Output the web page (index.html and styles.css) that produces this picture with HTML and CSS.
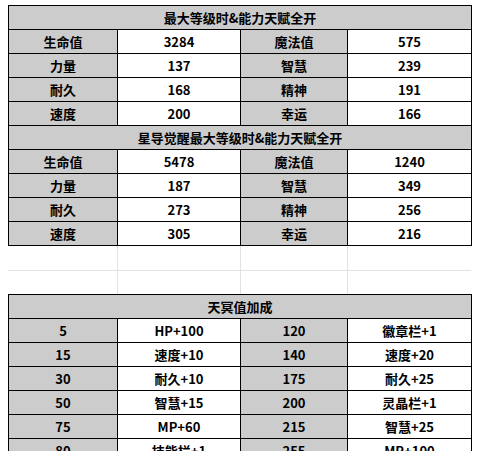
FILE: index.html
```html
<!DOCTYPE html>
<html>
<head>
<meta charset="utf-8">
<link rel="stylesheet" href="styles.css">
</head>
<body>
<div class="page">
<table class="sheet">
<colgroup><col class="c1"><col class="c2"><col class="c3"><col class="c4"></colgroup>
<tr><th colspan="4" class="head">最大等级时&amp;能力天赋全开</th></tr>
<tr><td class="k">生命值</td><td class="v">3284</td><td class="k">魔法值</td><td class="v">575</td></tr>
<tr><td class="k">力量</td><td class="v">137</td><td class="k">智慧</td><td class="v">239</td></tr>
<tr><td class="k">耐久</td><td class="v">168</td><td class="k">精神</td><td class="v">191</td></tr>
<tr><td class="k">速度</td><td class="v">200</td><td class="k">幸运</td><td class="v">166</td></tr>
<tr><th colspan="4" class="head">星导觉醒最大等级时&amp;能力天赋全开</th></tr>
<tr><td class="k">生命值</td><td class="v">5478</td><td class="k">魔法值</td><td class="v">1240</td></tr>
<tr><td class="k">力量</td><td class="v">187</td><td class="k">智慧</td><td class="v">349</td></tr>
<tr><td class="k">耐久</td><td class="v">273</td><td class="k">精神</td><td class="v">256</td></tr>
<tr><td class="k">速度</td><td class="v">305</td><td class="k">幸运</td><td class="v">216</td></tr>
</table>
<table class="grid">
<colgroup><col class="c1"><col class="c2"><col class="c3"><col class="c4"></colgroup>
<tr><td></td><td></td><td></td><td></td></tr>
<tr><td></td><td></td><td></td><td></td></tr>
</table>
<table class="sheet">
<colgroup><col class="c1"><col class="c2"><col class="c3"><col class="c4"></colgroup>
<tr><th colspan="4" class="head">天冥值加成</th></tr>
<tr><td class="k">5</td><td class="v">HP+100</td><td class="k">120</td><td class="v">徽章栏+1</td></tr>
<tr><td class="k">15</td><td class="v">速度+10</td><td class="k">140</td><td class="v">速度+20</td></tr>
<tr><td class="k">30</td><td class="v">耐久+10</td><td class="k">175</td><td class="v">耐久+25</td></tr>
<tr><td class="k">50</td><td class="v">智慧+15</td><td class="k">200</td><td class="v">灵晶栏+1</td></tr>
<tr><td class="k">75</td><td class="v">MP+60</td><td class="k">215</td><td class="v">智慧+25</td></tr>
<tr><td class="k">80</td><td class="v">技能栏+1</td><td class="k">255</td><td class="v">MP+100</td></tr>
</table>
</div>
</body>
</html>
```
FILE: styles.css
```css
html, body {
  margin: 0;
  padding: 0;
  background: #ffffff;
}
.page {
  padding: 5px 0 0 8px;
  font-family: "Noto Sans CJK SC", "Noto Sans", sans-serif;
  font-size: 13px;
  font-weight: bold;
  color: #000;
}
table {
  border-collapse: collapse;
  table-layout: fixed;
  width: 463px;
}
.c1 { width: 109px; }
.c2 { width: 123px; }
.c3 { width: 107px; }
.c4 { width: 124px; }
.sheet tr { height: 24px; }
.sheet th, .sheet td {
  border: 1px solid #000;
  padding: 0;
  text-align: center;
  line-height: 16px;
  white-space: nowrap;
  overflow: hidden;
}
.head {
  background: #cccccc;
  font-weight: bold;
}
.k { background: #cccccc; }
.v { background: #ffffff; }
.grid tr { height: 24px; }
.grid td {
  padding: 0;
  border-right: 1px solid #e2e2e2;
  border-bottom: 1px solid #e2e2e2;
}
.grid td:last-child { border-right: none; }
.grid tr:last-child td { border-bottom: none; }
```
